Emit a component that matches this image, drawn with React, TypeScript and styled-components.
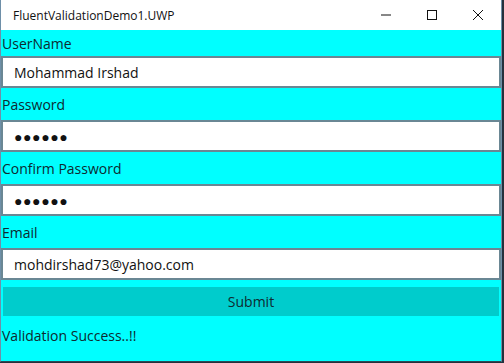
import React from "react";
import styled, { createGlobalStyle } from "styled-components";

const GlobalStyle = createGlobalStyle`
  html, body {
    margin: 0;
    padding: 0;
    background: #24313d;
    font-family: "Segoe UI", "Open Sans", "Noto Sans", sans-serif;
  }
`;

const Window = styled.div`
  width: 502px;
  height: 362px;
  box-sizing: border-box;
  background: #00ffff;
  border-left: 1px solid #6e8fa8;
  border-right: 1px solid #6e8fa8;
  border-bottom: 1px solid #2d4a55;
  display: flex;
  flex-direction: column;
  overflow: hidden;
`;

const TitleBar = styled.div`
  height: 30px;
  flex-shrink: 0;
  background: #ffffff;
  display: flex;
  align-items: center;
  justify-content: space-between;
`;

const Title = styled.span`
  padding-left: 12px;
  font-size: 12px;
  color: #111;
`;

const Controls = styled.div`
  display: flex;
  height: 100%;
`;

const ControlButton = styled.div`
  width: 46px;
  height: 100%;
  display: flex;
  align-items: center;
  justify-content: center;
`;

const Form = styled.div`
  display: flex;
  flex-direction: column;
`;

const Label = styled.div<{ $h: number }>`
  height: ${(p) => p.$h}px;
  display: flex;
  align-items: center;
  padding-left: 1px;
  font-size: 14px;
  color: #0e2a30;
`;

const Field = styled.input<{ $dots?: boolean }>`
  height: 32px;
  box-sizing: border-box;
  width: 100%;
  margin: 0;
  border: 2px solid #6a8794;
  background: #ffffff;
  padding: 0 11px;
  font-family: inherit;
  font-size: ${(p) => (p.$dots ? "14px" : "14px")};
  letter-spacing: ${(p) => (p.$dots ? "0.6px" : "0")};
  color: #111;
  outline: none;
`;

const SubmitButton = styled.div`
  margin: 7px 2px 0 2px;
  height: 29px;
  background: #00cccc;
  display: flex;
  align-items: center;
  justify-content: center;
  font-size: 14px;
  color: #0e2a30;
`;

const Message = styled.div`
  margin-top: 10px;
  padding-left: 1px;
  font-size: 14px;
  color: #0e2a30;
`;

const fields = [
  { label: "UserName", value: "Mohammad Irshad", h: 26 },
  { label: "Password", value: "●●●●●●", h: 32, dots: true },
  { label: "Confirm Password", value: "●●●●●●", h: 32, dots: true },
  { label: "Email", value: "mohdirshad73@yahoo.com", h: 32 },
];

export default function App() {
  return (
    <>
      <GlobalStyle />
      <Window>
        <TitleBar>
          <Title>FluentValidationDemo1.UWP</Title>
          <Controls>
            <ControlButton>
              <svg width="10" height="10" viewBox="0 0 10 10">
                <line x1="0" y1="5" x2="10" y2="5" stroke="#111" strokeWidth="1" />
              </svg>
            </ControlButton>
            <ControlButton>
              <svg width="10" height="10" viewBox="0 0 10 10">
                <rect x="0.5" y="0.5" width="9" height="9" fill="none" stroke="#111" strokeWidth="1" />
              </svg>
            </ControlButton>
            <ControlButton>
              <svg width="10" height="10" viewBox="0 0 10 10">
                <path d="M0 0 L10 10 M10 0 L0 10" stroke="#111" strokeWidth="1" />
              </svg>
            </ControlButton>
          </Controls>
        </TitleBar>
        <Form>
          {fields.map((f) => (
            <React.Fragment key={f.label}>
              <Label $h={f.h}>{f.label}</Label>
              <Field type="text" readOnly value={f.value} $dots={f.dots} />
            </React.Fragment>
          ))}
          <SubmitButton>Submit</SubmitButton>
          <Message>Validation Success..!!</Message>
        </Form>
      </Window>
    </>
  );
}
